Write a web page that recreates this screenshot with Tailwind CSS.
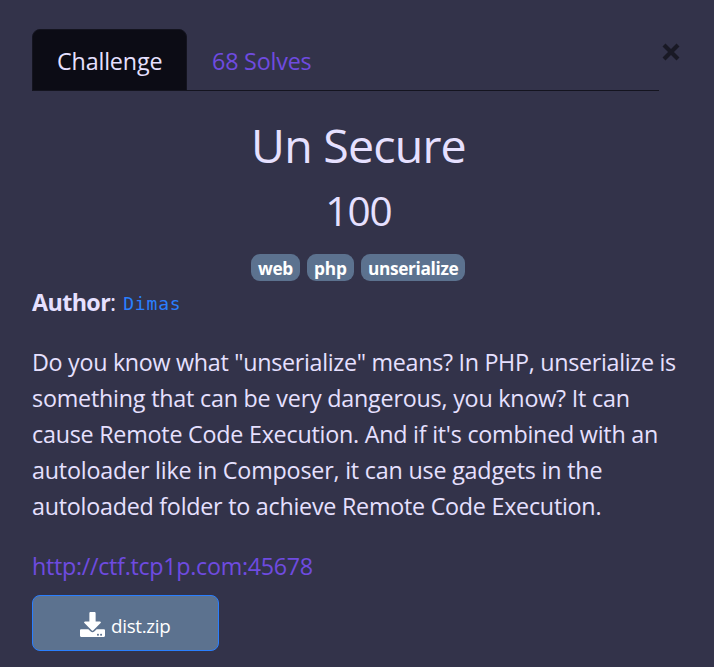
<!DOCTYPE html>
<html lang="en">
<head>
<meta charset="utf-8">
<title>Un Secure</title>
<script src="https://cdn.jsdelivr.net/npm/@tailwindcss/browser@4"></script>
</head>
<body class="h-[667px] overflow-hidden bg-[#33334a] pt-[29px] pl-8 font-['Open_Sans','Noto_Sans',sans-serif] text-[23.3px] leading-9 text-[#e6e0ff]">
  <header class="flex">
    <nav class="flex h-[62px] w-[627px] border-b border-[#14141f]">
      <a class="-mb-px h-[62px] w-[155px] rounded-t-lg border border-[#14141f] bg-[#0c0c15] pt-[13px] pl-6 tracking-[-0.16px]">Challenge</a>
      <a class="pt-[14px] pl-[25px] tracking-[-0.19px] text-[#6f4be0]">68 Solves</a>
    </nav>
    <button class="mt-[14px] ml-[3px] h-[18px] w-[18px]" aria-label="Close">
      <svg viewBox="0 0 18 18" class="block h-full w-full" stroke="#191925" stroke-width="4.2"><path d="M2 2 16 16M16 2 2 16"/></svg>
    </button>
  </header>

  <main class="w-[653px]">
    <h2 class="mt-[25px] text-center text-[46.5px] leading-[58px] tracking-[-0.8px]">Un Secure</h2>
    <h3 class="mt-[11px] text-center text-[40.5px] leading-[52px] tracking-[-1px]">100</h3>
    <div class="mt-[17px] ml-[219px] flex gap-[7px] text-[17.3px] leading-[27px] font-bold text-white">
      <span class="h-[27px] w-[49px] rounded-[9px] bg-[#5c728f] pt-px pl-[7px] tracking-[-0.4px]">web</span>
      <span class="h-[27px] w-[47px] rounded-[9px] bg-[#5c728f] pt-px pl-[7px] tracking-[-0.1px]">php</span>
      <span class="h-[27px] w-[104px] rounded-[9px] bg-[#5c728f] pt-px pl-[7px] tracking-[-0.36px]">unserialize</span>
    </div>
    <p class="mt-[3px] flex h-9 whitespace-pre"><strong class="tracking-[-0.62px]">Author</strong>:<code class="ml-[7px] pt-[2px] font-['DejaVu_Sans_Mono',monospace] text-[18px] leading-9 tracking-[0.8px] text-[#2a7fff]">Dimas</code></p>
    <p class="mt-6 whitespace-nowrap">
      <span class="block tracking-[-0.3px]">Do you know what "unserialize" means? In PHP, unserialize is</span>
      <span class="block tracking-[-0.21px]">something that can be very dangerous, you know? It can</span>
      <span class="block tracking-[-0.235px]">cause Remote Code Execution. And if it's combined with an</span>
      <span class="block tracking-[-0.2px]">autoloader like in Composer, it can use gadgets in the</span>
      <span class="block tracking-[-0.25px]">autoloaded folder to achieve Remote Code Execution.</span>
    </p>
    <p class="mt-6 tracking-[-0.3px] text-[#6f4be0]">http://ctf.tcp1p.com:45678</p>
    <a class="mt-[11px] flex h-14 w-[187px] rounded-lg border border-[#2a7fff] bg-[#5c728f] pl-[47px] text-[18.8px] text-white">
      <svg viewBox="0 0 512 512" class="mt-4 h-[25px] w-[25px]" fill="#fff"><path d="M216 0h80c13.300 0 24 10.700 24 24v168h87.700c17.800 0 26.700 21.500 14.100 34.100L269.700 378.300c-7.500 7.500-19.800 7.500-27.300 0L90.100 226.100c-12.600-12.600-3.700-34.100 14.100-34.100H192V24c0-13.300 10.700-24 24-24zm296 376v112c0 13.300-10.700 24-24 24H24c-13.300 0-24-10.700-24-24V376c0-13.300 10.700-24 24-24h146.700l49 49c20.100 20.100 52.500 20.100 72.600 0l49-49H488c13.300 0 24 10.700 24 24zm-124 88c0-11-9-20-20-20s-20 9-20 20 9 20 20 20 20-9 20-20zm64 0c0-11-9-20-20-20s-20 9-20 20 9 20 20 20 20-9 20-20z"/></svg>
      <span class="ml-[6px] pt-3 tracking-[-0.3px]">dist.zip</span>
    </a>
  </main>
</body>
</html>
